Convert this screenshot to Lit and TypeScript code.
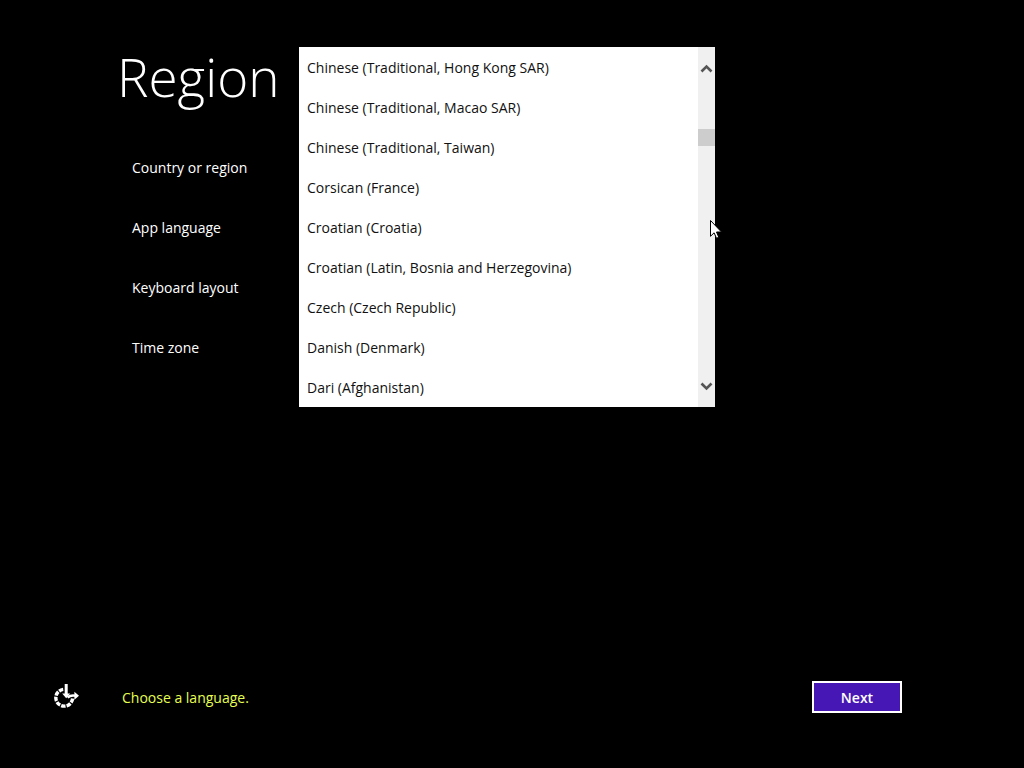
import { LitElement, html, css } from "lit";
import { customElement, state } from "lit/decorators.js";

const LANGUAGES = [
  "Chinese (Traditional, Hong Kong SAR)",
  "Chinese (Traditional, Macao SAR)",
  "Chinese (Traditional, Taiwan)",
  "Corsican (France)",
  "Croatian (Croatia)",
  "Croatian (Latin, Bosnia and Herzegovina)",
  "Czech (Czech Republic)",
  "Danish (Denmark)",
  "Dari (Afghanistan)",
];

@customElement("language-list")
export class LanguageList extends LitElement {
  static styles = css`
    :host {
      display: flex;
      position: relative;
      background: #fff;
    }
    .list {
      flex: 1;
      min-width: 0;
      margin: 0;
      padding: 0;
      border: 0;
      border-radius: 0;
      outline: 0;
      overflow: hidden;
      background: #fff;
      color: #111;
      font: 14px/20px "Open Sans", "Noto Sans", sans-serif;
      height: 360px;
    }
    .option {
      height: 40px;
      min-height: 40px;
      padding: 11px 8px 0;
      box-sizing: border-box;
    }
    .bar {
      flex: none;
      width: 17px;
      display: flex;
      flex-direction: column;
      background: #f0f0f0;
    }
    .arrow {
      display: flex;
      align-items: center;
      justify-content: center;
      height: 42px;
      padding: 0;
      border: 0;
      background: none;
    }
    .track {
      flex: 1;
      padding-top: 40px;
    }
    .thumb {
      height: 17px;
      background: #cdcdcd;
    }
    .pointer {
      position: absolute;
      left: 411px;
      top: 173px;
      pointer-events: none;
    }
  `;

  render() {
    return html`
      <select class="list" size="9" aria-label="App language">
        ${LANGUAGES.map((name) => html`<option class="option">${name}</option>`)}
      </select>
      <div class="bar">
        <button class="arrow" type="button" aria-label="Scroll up">
          <svg width="13" height="9" viewBox="0 0 13 9">
            <path d="M1.5 7.5 6.5 2.5 11.5 7.5" fill="none" stroke="#555" stroke-width="2.6" />
          </svg>
        </button>
        <div class="track"><div class="thumb"></div></div>
        <button class="arrow" type="button" aria-label="Scroll down">
          <svg width="13" height="9" viewBox="0 0 13 9">
            <path d="M1.5 1.5 6.5 6.5 11.5 1.5" fill="none" stroke="#555" stroke-width="2.6" />
          </svg>
        </button>
      </div>
      <svg class="pointer" width="12" height="19" viewBox="0 0 12 19">
        <path
          d="M.5 .5V16.3L4.1 12.8 6.5 18.3 8.8 17.3 6.5 12H11.5Z"
          fill="#fff"
          stroke="#000"
          stroke-width="1"
        />
      </svg>
    `;
  }
}

@customElement("app-root")
export class AppRoot extends LitElement {
  @state() private fields = ["Country or region", "App language", "Keyboard layout", "Time zone"];

  static styles = css`
    :host {
      display: flex;
      flex-direction: column;
      min-height: 100vh;
      box-sizing: border-box;
      padding: 47px 122px 55px 52px;
      background: #000;
      color: #fff;
      font: 14px/20px "Open Sans", "Noto Sans", sans-serif;
    }
    .main {
      flex: 1;
      display: grid;
      grid-template-columns: 182px minmax(0, 416px);
      align-items: start;
      padding-left: 65px;
    }
    .title {
      margin: 0;
      font-size: 53px;
      font-weight: 300;
      line-height: 60px;
    }
    .fields {
      display: flex;
      flex-direction: column;
      gap: 40px;
      margin: 0;
      padding: 51px 0 0 15px;
      list-style: none;
    }
    .footer {
      display: flex;
      align-items: center;
    }
    .ease {
      display: flex;
      width: 70px;
      padding: 0;
      border: 0;
      background: none;
    }
    .hint {
      flex: 1;
      margin: 0;
      padding-top: 2px;
      color: #e6ff50;
    }
    .next {
      width: 90px;
      height: 32px;
      padding: 2px 0 0;
      border: 2px solid #fff;
      background: #4617b4;
      color: #fff;
      font: 600 14px/20px "Open Sans", "Noto Sans", sans-serif;
    }
  `;

  render() {
    return html`
      <main class="main">
        <div>
          <h1 class="title">Region</h1>
          <ul class="fields">
            ${this.fields.map((name) => html`<li>${name}</li>`)}
          </ul>
        </div>
        <language-list></language-list>
      </main>
      <footer class="footer">
        <button class="ease" type="button" aria-label="Ease of access">
          <svg width="28" height="28" viewBox="0 0 28 28" fill="none" stroke="#fff">
            <path
              d="M20.6 15.5A8.4 8.4 0 1 1 11.2 6.4"
              stroke-width="3.4"
              pathLength="68"
              stroke-dasharray="8 2"
            />
            <path d="M14.2 1V12" stroke-width="3" />
            <path d="M10.2 10.6H18.2L14.2 15.2Z" fill="#fff" stroke="none" />
            <path d="M15.5 14.5Q18.5 12 23 12.7" stroke-width="2.6" />
            <path d="M22.4 8.8 27 12.8 22.4 16.8Z" fill="#fff" stroke="none" />
          </svg>
        </button>
        <p class="hint">Choose a language.</p>
        <button class="next" type="button">Next</button>
      </footer>
    `;
  }
}
